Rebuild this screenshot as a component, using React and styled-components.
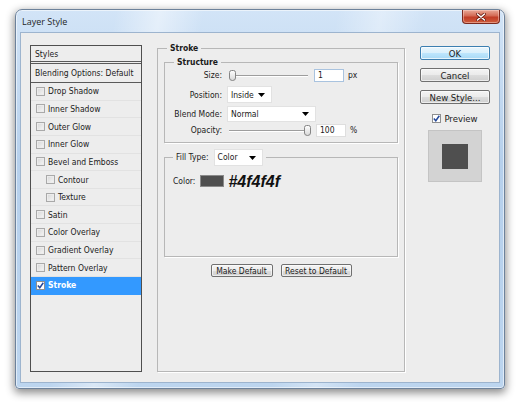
import React from 'react';
import styled, { createGlobalStyle } from 'styled-components';

const GlobalStyle = createGlobalStyle`
  html, body {
    margin: 0;
    background: #ffffff;
  }
  body {
    width: 520px;
    height: 402px;
    overflow: hidden;
    font-family: "DejaVu Sans Condensed", "DejaVu Sans", sans-serif;
    font-stretch: semi-condensed;
    font-size: 8.5px;
    color: #1b1b1b;
  }
`;

const Stage = styled.div`
  padding: 9px 0 0 15px;
`;

const Window = styled.div`
  box-sizing: border-box;
  width: 490px;
  height: 380px;
  display: flex;
  flex-direction: column;
  border: 1px solid #6d829b;
  border-radius: 7px 7px 4px 4px;
  padding: 0 4px 5px 4px;
  background:
    linear-gradient(100deg, rgba(255,255,255,0) 18%, rgba(255,255,255,0.45) 26%, rgba(255,255,255,0) 34%,
      rgba(255,255,255,0) 58%, rgba(255,255,255,0.35) 66%, rgba(255,255,255,0) 74%),
    linear-gradient(#d2e4f7, #b6d0ec 40%, #bcd5ef);
  box-shadow: 0 3px 9px 1px rgba(0, 0, 0, 0.45), inset 0 0 0 1px rgba(255, 255, 255, 0.55);
`;

const TitleBar = styled.div`
  height: 22px;
  display: flex;
  justify-content: space-between;
  flex: none;
`;

const Title = styled.span`
  align-self: center;
  padding-left: 2px;
  font-family: "Open Sans", "Noto Sans", sans-serif;
  font-stretch: normal;
  font-size: 9px;
  color: #1e1e1e;
`;

const CloseButton = styled.div`
  width: 38px;
  height: 14px;
  box-sizing: border-box;
  border: 1px solid #7b2a1f;
  border-top: none;
  border-radius: 0 0 4px 4px;
  display: flex;
  align-items: center;
  justify-content: center;
  background: linear-gradient(#e9a998, #d36a54 45%, #c13d27 55%, #cf5d3c);
  box-shadow: inset 0 0 0 1px rgba(255, 220, 210, 0.45);
`;

const Client = styled.div`
  flex: 1;
  display: flex;
  gap: 15px;
  padding: 12px 9px 10px 9px;
  border: 1px solid #9db4ce;
  background: #ededed;
`;

/* styles list */
const StyleList = styled.div`
  width: 112px;
  box-sizing: border-box;
  flex: none;
  border: 1px solid #4f4f4f;
  display: flex;
  flex-direction: column;
`;

const ListHead = styled.div`
  height: ${p => p.$h}px;
  box-sizing: border-box;
  display: flex;
  align-items: center;
  padding-left: 4px;
  border-bottom: ${p => (p.$double ? '3px double #5a5a5a' : '1px solid #5a5a5a')};
`;

const ListItem = styled.div`
  height: 17.65px;
  box-sizing: border-box;
  display: flex;
  align-items: center;
  gap: 3px;
  padding-left: ${p => (p.$sub ? 15 : 5)}px;
  border-bottom: 1px solid ${p => (p.$active ? '#3399ff' : '#e2e2e2')};
  background: ${p => (p.$active ? '#3399ff' : 'transparent')};
  color: ${p => (p.$active ? '#ffffff' : '#1b1b1b')};
  font-weight: ${p => (p.$active ? 'bold' : 'normal')};
`;

const CheckBox = styled.span`
  width: 9px;
  height: 9px;
  box-sizing: border-box;
  flex: none;
  display: flex;
  align-items: center;
  justify-content: center;
  border: 1px solid ${p => (p.$checked ? '#8e8f8f' : '#a9a9a9')};
  background: ${p => (p.$checked ? '#ffffff' : 'linear-gradient(135deg, #d6d6d6, #f7f7f7)')};
  box-shadow: ${p => (p.$checked ? 'none' : 'inset 0 0 0 1px #ececec')};
`;

/* middle column */
const Middle = styled.div`
  width: 248px;
  flex: none;
  display: flex;
  flex-direction: column;
`;

const Group = styled.fieldset`
  margin: ${p => p.$top || 0}px 0 0 0;
  padding: ${p => p.$pad};
  min-width: 0;
  flex: ${p => (p.$fill ? 1 : 'none')};
  border: 1px solid #b7b7b7;
  box-shadow: 1px 1px 0 #ffffff;
  display: flex;
  flex-direction: column;
`;

const Caption = styled.legend`
  display: flex;
  align-items: center;
  gap: 5px;
  margin-left: ${p => p.$indent}px;
  padding: 0 3px;
  line-height: 11px;
  font-weight: ${p => (p.$bold ? 'bold' : 'normal')};
`;

const Field = styled.div`
  display: flex;
  align-items: center;
  height: ${p => p.$h}px;
  margin-top: ${p => p.$gap || 0}px;
`;

const FieldLabel = styled.span`
  width: 57px;
  flex: none;
  text-align: right;
  margin-right: 5px;
`;

const Track = styled.div`
  position: relative;
  width: ${p => p.$w}px;
  height: 11px;
  margin-left: 2px;
  &::before {
    content: '';
    position: absolute;
    left: 0;
    right: 0;
    top: 5px;
    height: 1px;
    background: #9d9d9d;
    box-shadow: 0 1px 0 #ffffff;
  }
`;

const Thumb = styled.svg`
  position: absolute;
  top: 0;
`;

const NumberBox = styled.div`
  width: 30px;
  height: 13px;
  box-sizing: border-box;
  margin-left: ${p => p.$left}px;
  padding-left: 3px;
  display: flex;
  align-items: center;
  background: #ffffff;
  border: 1px solid ${p => (p.$focus ? '#a9c3df' : '#dedede')};
`;

const Unit = styled.span`
  margin-left: 4px;
`;

const Select = styled.div`
  width: ${p => p.$w}px;
  height: ${p => p.$h}px;
  box-sizing: border-box;
  display: flex;
  align-items: center;
  justify-content: space-between;
  padding: 0 6px 0 3px;
  background: #ffffff;
  border: 1px solid #e2e2e2;
`;

const ColorRow = styled.div`
  display: flex;
  align-items: center;
  height: 14px;
  margin-top: 8px;
`;

const Swatch = styled.span`
  width: 24px;
  height: 12px;
  margin: 0 4px 0 5px;
  background: ${p => p.$color};
  border: 1px solid #8a8a8a;
  box-sizing: border-box;
`;

const HexText = styled.span`
  font-family: "Liberation Sans", Arial, sans-serif;
  font-stretch: normal;
  font-style: italic;
  font-weight: bold;
  font-size: 16px;
  color: #111111;
  margin-top: 2px;
`;

const ButtonRow = styled.div`
  display: flex;
  justify-content: center;
  gap: 8px;
  margin-top: 7px;
`;

const Button = styled.div`
  width: ${p => p.$w}px;
  height: ${p => p.$h || 13}px;
  box-sizing: border-box;
  display: flex;
  align-items: center;
  justify-content: center;
  border: 1px solid ${p => (p.$primary ? '#3c7fb1' : '#707070')};
  border-radius: 2px;
  font-size: ${p => p.$size || 8.5}px;
  color: #1b1b1b;
  background: ${p =>
    p.$primary
      ? 'linear-gradient(#eaf6fd, #d9f0fc 50%, #bee6fd 51%, #a7d9f5)'
      : 'linear-gradient(#f4f4f4, #ebebeb 50%, #dddddd 51%, #cfcfcf)'};
  box-shadow: inset 0 0 0 1px ${p => (p.$primary ? 'rgba(255,255,255,0.7)' : 'rgba(255,255,255,0.6)')};
`;

/* right column */
const Side = styled.div`
  width: 70px;
  flex: none;
  display: flex;
  flex-direction: column;
  align-items: center;
  gap: 8px;
  padding-top: 1px;
`;

const PreviewToggle = styled.div`
  display: flex;
  align-items: center;
  gap: 3px;
  margin-top: 1px;
  font-size: 9.5px;
`;

const PreviewBox = styled.div`
  width: 54px;
  height: 52px;
  margin-top: -2px;
  display: flex;
  align-items: center;
  justify-content: center;
  background: #d3d3d3;
  border: 1px solid #c4c4c4;
  box-sizing: border-box;
`;

const PreviewShape = styled.div`
  width: 26px;
  height: 25px;
  background: #4f4f4f;
`;

const layers = [
  { label: 'Drop Shadow' },
  { label: 'Inner Shadow' },
  { label: 'Outer Glow' },
  { label: 'Inner Glow' },
  { label: 'Bevel and Emboss' },
  { label: 'Contour', sub: true },
  { label: 'Texture', sub: true },
  { label: 'Satin' },
  { label: 'Color Overlay' },
  { label: 'Gradient Overlay' },
  { label: 'Pattern Overlay' },
  { label: 'Stroke', checked: true },
];

const Tick = () => (
  <svg width="7" height="7" viewBox="0 0 7 7">
    <path d="M0.8 3.6 L2.8 5.8 L6.3 0.8" fill="none" stroke="#24489a" strokeWidth="1.5" />
  </svg>
);

const Check = ({ checked }) => <CheckBox $checked={checked}>{checked && <Tick />}</CheckBox>;

const Arrow = () => (
  <svg width="7" height="4" viewBox="0 0 7 4">
    <polygon points="0,0 7,0 3.5,4" fill="#000" />
  </svg>
);

const Slider = ({ width, value }) => (
  <Track $w={width}>
    <Thumb width="7" height="11" viewBox="0 0 7 11" style={{ left: `${value * (width - 7)}px` }}>
      <defs>
        <linearGradient id="thumbFill" x1="0" y1="0" x2="0" y2="1">
          <stop offset="0" stopColor="#ffffff" />
          <stop offset="1" stopColor="#d8d8d8" />
        </linearGradient>
      </defs>
      <path d="M0.5 2.5 Q0.5 0.5 2.5 0.5 H4.5 Q6.5 0.5 6.5 2.5 V8 Q6.5 10.5 3.5 10.5 Q0.5 10.5 0.5 8 Z" fill="url(#thumbFill)" stroke="#858585" />
    </Thumb>
  </Track>
);

export default function App() {
  return (
    <>
      <GlobalStyle />
      <Stage>
        <Window>
          <TitleBar>
            <Title>Layer Style</Title>
            <CloseButton>
              <svg width="10" height="8" viewBox="0 0 10 8">
                <path d="M1.5 1 L8.5 7 M8.5 1 L1.5 7" stroke="#6a1c10" strokeWidth="3" strokeLinecap="round" />
                <path d="M1.5 1 L8.5 7 M8.5 1 L1.5 7" stroke="#ffffff" strokeWidth="1.6" strokeLinecap="round" />
              </svg>
            </CloseButton>
          </TitleBar>
          <Client>
            <StyleList>
              <ListHead $h={18} $double>Styles</ListHead>
              <ListHead $h={19}>Blending Options: Default</ListHead>
              {layers.map(l => (
                <ListItem key={l.label} $sub={l.sub} $active={l.checked}>
                  <Check checked={l.checked} />
                  {l.label}
                </ListItem>
              ))}
            </StyleList>

            <Middle>
              <Group $top={-2} $pad="3px 6px 0 6px" $fill>
                <Caption $indent={3} $bold>Stroke</Caption>
                <Group $pad="0 0 6px 0">
                  <Caption $indent={9} $bold>Structure</Caption>
                  <Field $h={14}>
                    <FieldLabel>Size:</FieldLabel>
                    <Slider width={79} value={0} />
                    <NumberBox $left={6} $focus>1</NumberBox>
                    <Unit>px</Unit>
                  </Field>
                  <Field $h={17} $gap={4}>
                    <FieldLabel>Position:</FieldLabel>
                    <Select $w={45} $h={17}>Inside<Arrow /></Select>
                  </Field>
                  <Field $h={16} $gap={3}>
                    <FieldLabel>Blend Mode:</FieldLabel>
                    <Select $w={89} $h={16}>Normal<Arrow /></Select>
                  </Field>
                  <Field $h={12} $gap={2}>
                    <FieldLabel>Opacity:</FieldLabel>
                    <Slider width={82} value={1} />
                    <NumberBox $left={5}>100</NumberBox>
                    <Unit>%</Unit>
                  </Field>
                </Group>

                <Group $top={6} $pad="0 0 68px 8px">
                  <Caption $indent={0}>
                    Fill Type:
                    <Select $w={49} $h={17}>Color<Arrow /></Select>
                  </Caption>
                  <ColorRow>
                    Color:
                    <Swatch $color="#4f4f4f" />
                    <HexText>#4f4f4f</HexText>
                  </ColorRow>
                </Group>

                <ButtonRow>
                  <Button $w={62}>Make Default</Button>
                  <Button $w={71}>Reset to Default</Button>
                </ButtonRow>
              </Group>
            </Middle>

            <Side>
              <Button $w={70} $h={14} $size={9.5} $primary>OK</Button>
              <Button $w={70} $h={14} $size={9.5}>Cancel</Button>
              <Button $w={70} $h={14} $size={9.5}>New Style...</Button>
              <PreviewToggle>
                <Check checked />
                Preview
              </PreviewToggle>
              <PreviewBox>
                <PreviewShape />
              </PreviewBox>
            </Side>
          </Client>
        </Window>
      </Stage>
    </>
  );
}
